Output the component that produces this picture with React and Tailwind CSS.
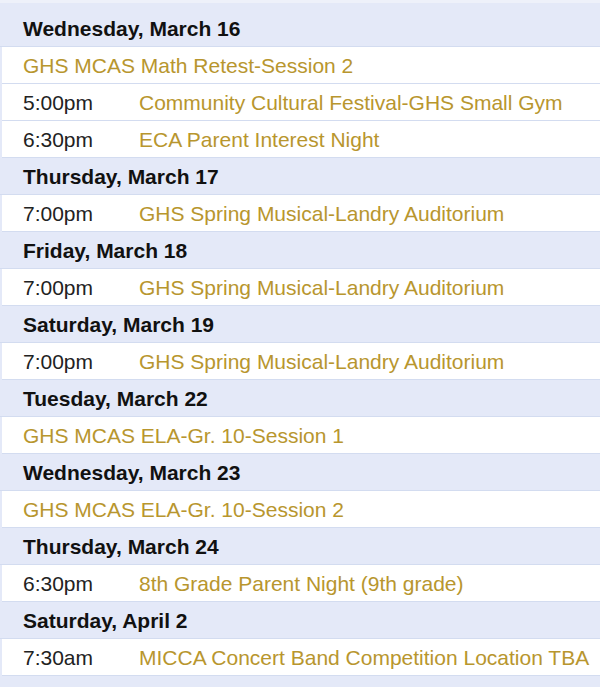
const days = [
  {
    date: 'Wednesday, March 16',
    events: [
      { title: 'GHS MCAS Math Retest-Session 2' },
      { time: '5:00pm', title: 'Community Cultural Festival-GHS Small Gym' },
      { time: '6:30pm', title: 'ECA Parent Interest Night' },
    ],
  },
  { date: 'Thursday, March 17', events: [{ time: '7:00pm', title: 'GHS Spring Musical-Landry Auditorium' }] },
  { date: 'Friday, March 18', events: [{ time: '7:00pm', title: 'GHS Spring Musical-Landry Auditorium' }] },
  { date: 'Saturday, March 19', events: [{ time: '7:00pm', title: 'GHS Spring Musical-Landry Auditorium' }] },
  { date: 'Tuesday, March 22', events: [{ title: 'GHS MCAS ELA-Gr. 10-Session 1' }] },
  { date: 'Wednesday, March 23', events: [{ title: 'GHS MCAS ELA-Gr. 10-Session 2' }] },
  { date: 'Thursday, March 24', events: [{ time: '6:30pm', title: '8th Grade Parent Night (9th grade)' }] },
  { date: 'Saturday, April 2', events: [{ time: '7:30am', title: 'MICCA Concert Band Competition Location TBA' }] },
];

const App = () => {
  return (
    <div
      className="w-[600px] h-[687px] overflow-hidden bg-[#e4e9f8] border-t-[3px] border-[#eef1fa] pt-[7px] text-[21px] leading-none"
      style={{ fontFamily: '"Liberation Sans", Arial, sans-serif' }}
    >
      {days.map((day) => (
        <div key={day.date}>
          <div className="h-[37px] flex items-center pl-[23px] border-b border-[#d3dcf0] font-bold text-[#111]">
            {day.date}
          </div>
          {day.events.map((ev, idx) => (
            <div
              key={idx}
              className="h-[37px] ml-[2px] bg-white flex items-center pl-[21px] border-b border-[#d3dcf0] whitespace-nowrap"
            >
              {ev.time && <span className="w-[116px] shrink-0 text-[#222]">{ev.time}</span>}
              <span className="text-[#b8962e]">{ev.title}</span>
            </div>
          ))}
        </div>
      ))}
    </div>
  );
};

export default App;
